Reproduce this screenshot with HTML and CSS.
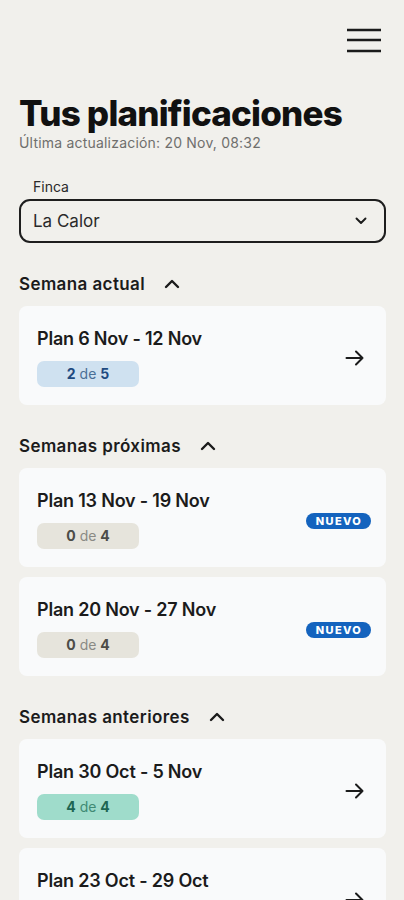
FILE: index.html
```html
<!DOCTYPE html>
<html lang="es">

<head>
    <meta charset="UTF-8">
    <meta name="viewport" content="width=device-width, initial-scale=1.0">
    <title>Tus planificaciones</title>
    <link rel="stylesheet" href="styles.css">
</head>

<body>
    <div class="page">
        <div class="topbar">
            <button class="menu-btn" aria-label="Menú">
                <svg width="36" height="26" viewBox="0 0 36 26">
                    <path d="M1 3h34M1 13h34M1 24h34" stroke="#1b1b1b" stroke-width="2.4" fill="none" />
                </svg>
            </button>
        </div>

        <h1 class="title">Tus planificaciones</h1>
        <div class="updated">Última actualización: 20 Nov, 08:32</div>

        <div class="field">
            <label class="field__label">Finca</label>
            <div class="select">
                <span>La Calor</span>
                <svg width="12" height="8" viewBox="0 0 12 8">
                    <path d="M1.5 1.5l4.5 4.5 4.5-4.5" stroke="#1b1b1b" stroke-width="1.9" fill="none" stroke-linecap="round" stroke-linejoin="round" />
                </svg>
            </div>
        </div>

        <div class="section">
            <div class="section__head">
                <span>Semana actual</span>
                <svg class="caret" width="16" height="10" viewBox="0 0 16 10">
                    <path d="M2 8l6-6 6 6" stroke="#1b1b1b" stroke-width="2.4" fill="none" stroke-linecap="round" stroke-linejoin="round" />
                </svg>
            </div>
            <div class="card">
                <div class="card__body">
                    <div class="card__title">Plan 6 Nov - 12 Nov</div>
                    <div class="badge badge--blue"><b>2</b> de <b>5</b></div>
                </div>
                <svg class="arrow" width="20" height="16" viewBox="0 0 20 16">
                    <path d="M1.5 8h16M11 1.5L17.5 8 11 14.5" stroke="#1b1b1b" stroke-width="2" fill="none" stroke-linecap="round" stroke-linejoin="round" />
                </svg>
            </div>
        </div>

        <div class="section">
            <div class="section__head">
                <span>Semanas próximas</span>
                <svg class="caret" width="16" height="10" viewBox="0 0 16 10">
                    <path d="M2 8l6-6 6 6" stroke="#1b1b1b" stroke-width="2.4" fill="none" stroke-linecap="round" stroke-linejoin="round" />
                </svg>
            </div>
            <div class="card">
                <div class="card__body">
                    <div class="card__title">Plan 13 Nov - 19 Nov</div>
                    <div class="badge badge--gray"><b>0</b> de <b>4</b></div>
                </div>
                <span class="tag">NUEVO</span>
            </div>
            <div class="card">
                <div class="card__body">
                    <div class="card__title">Plan 20 Nov - 27 Nov</div>
                    <div class="badge badge--gray"><b>0</b> de <b>4</b></div>
                </div>
                <span class="tag">NUEVO</span>
            </div>
        </div>

        <div class="section">
            <div class="section__head">
                <span>Semanas anteriores</span>
                <svg class="caret" width="16" height="10" viewBox="0 0 16 10">
                    <path d="M2 8l6-6 6 6" stroke="#1b1b1b" stroke-width="2.4" fill="none" stroke-linecap="round" stroke-linejoin="round" />
                </svg>
            </div>
            <div class="card">
                <div class="card__body">
                    <div class="card__title">Plan 30 Oct - 5 Nov</div>
                    <div class="badge badge--green"><b>4</b> de <b>4</b></div>
                </div>
                <svg class="arrow" width="20" height="16" viewBox="0 0 20 16">
                    <path d="M1.5 8h16M11 1.5L17.5 8 11 14.5" stroke="#1b1b1b" stroke-width="2" fill="none" stroke-linecap="round" stroke-linejoin="round" />
                </svg>
            </div>
            <div class="card">
                <div class="card__body">
                    <div class="card__title">Plan 23 Oct - 29 Oct</div>
                    <div class="badge badge--green"><b>4</b> de <b>4</b></div>
                </div>
                <svg class="arrow" width="20" height="16" viewBox="0 0 20 16">
                    <path d="M1.5 8h16M11 1.5L17.5 8 11 14.5" stroke="#1b1b1b" stroke-width="2" fill="none" stroke-linecap="round" stroke-linejoin="round" />
                </svg>
            </div>
        </div>
    </div>
</body>

</html>
```

FILE: styles.css
```css
* {
    box-sizing: border-box;
    margin: 0;
    padding: 0;
}

body {
    background: #f1f0ec;
    font-family: Inter, "Noto Sans", sans-serif;
    color: #1b1b1b;
}

.page {
    padding: 0 18px 0 19px;
}

.topbar {
    display: flex;
    justify-content: flex-end;
    padding-top: 27px;
    height: 92px;
}

.menu-btn {
    background: none;
    border: none;
    width: 36px;
    height: 26px;
    margin-right: 4px;
}

.menu-btn svg {
    display: block;
}

.title {
    font-size: 35px;
    font-weight: 800;
    letter-spacing: -0.8px;
    line-height: 42px;
    color: #111;
}

.updated {
    font-size: 14px;
    letter-spacing: 0.2px;
    color: #6f6f6c;
    line-height: 17px;
    margin-top: 0;
}

.field {
    margin-top: 27px;
}

.field__label {
    display: block;
    font-size: 14px;
    line-height: 17px;
    color: #2a2a2a;
    padding-left: 14px;
    margin-bottom: 4px;
}

.select {
    height: 44px;
    border: 2px solid #1e1e1e;
    border-radius: 11px;
    display: flex;
    align-items: center;
    justify-content: space-between;
    padding: 0 17px 0 12px;
    font-size: 17px;
    color: #2a2a2a;
}

.section {
    margin-top: 30px;
}

.section__head {
    display: flex;
    align-items: center;
    font-size: 17px;
    font-weight: 600;
    letter-spacing: 0.4px;
    line-height: 22px;
    margin-bottom: 11px;
}

.caret {
    margin-left: 19px;
}

.card {
    background: #f9fafb;
    border-radius: 8px;
    display: flex;
    align-items: center;
    justify-content: space-between;
    padding: 22px 15px 18px 18px;
    margin-bottom: 10px;
}

.card__title {
    font-size: 18px;
    font-weight: 600;
    line-height: 22px;
    letter-spacing: -0.2px;
}

.badge {
    width: 102px;
    height: 26px;
    margin-top: 11px;
    border-radius: 7px;
    font-size: 14px;
    line-height: 26px;
    text-align: center;
}

.badge b {
    font-weight: 700;
}

.badge--blue {
    background: #cfe1f0;
    color: #4a6f96;
}

.badge--blue b {
    color: #1f4a80;
}

.badge--gray {
    background: #e6e4dc;
    color: #8a8a85;
}

.badge--gray b {
    color: #4c4c48;
}

.badge--green {
    background: #9fdccb;
    color: #3f8a74;
}

.badge--green b {
    color: #1d6652;
}

.arrow {
    margin-right: 6px;
}

.tag {
    background: #1463be;
    color: #fff;
    font-size: 11px;
    font-weight: 800;
    letter-spacing: 1.3px;
    line-height: 16px;
    padding: 0 9px 0 10px;
    border-radius: 8px;
    margin-top: 2px;
}
```
